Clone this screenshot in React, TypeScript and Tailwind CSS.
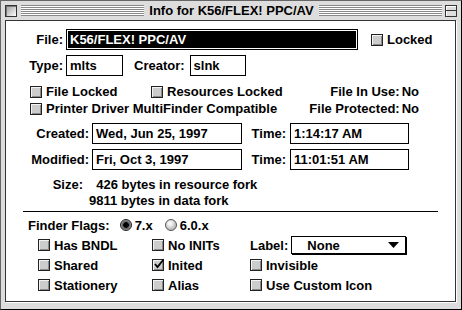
import React from 'react'

const font = "font-['Liberation_Sans',Arial,sans-serif] font-bold text-[13px] text-black"

function Check({ checked }: { checked?: boolean }) {
  return (
    <span className="relative inline-block w-[12px] h-[12px] shrink-0 border border-[#222] bg-[#cccccc] shadow-[inset_1px_1px_0_#f4f4f4,inset_-1px_-1px_0_#8a8a8a]">
      {checked && (
        <svg className="absolute left-[0px] top-[-2px]" width="12" height="12" viewBox="0 0 12 12">
          <path d="M2 6 L4.5 9 L10.5 1.5" fill="none" stroke="#000" strokeWidth="1.8" />
        </svg>
      )}
    </span>
  )
}

function CheckRow({ label, checked, className = '' }: { label: string; checked?: boolean; className?: string }) {
  return (
    <div className={`flex items-center gap-[4px] ${className}`}>
      <Check checked={checked} />
      <span className="leading-none">{label}</span>
    </div>
  )
}

function Radio({ on }: { on?: boolean }) {
  return on ? (
    <span className="inline-block w-[12px] h-[12px] rounded-full border border-[#222] bg-[radial-gradient(circle_at_50%_50%,#000_0,#000_2.5px,#555_3px,#999_5px)]" />
  ) : (
    <span className="inline-block w-[12px] h-[12px] rounded-full border border-[#555] bg-[radial-gradient(circle_at_40%_35%,#fff_0,#eee_2px,#bbb_6px)]" />
  )
}

function Field({ value, className = '' }: { value: string; className?: string }) {
  return (
    <div className={`h-[21px] border border-black bg-white flex items-center pl-[3px] ${className}`}>
      <span className="leading-none">{value}</span>
    </div>
  )
}

function Stripes() {
  return <div className="flex-1 h-[11px] bg-[repeating-linear-gradient(to_bottom,#888_0px,#888_1px,#fff_1px,#fff_2px)]" />
}

export default function App() {
  return (
    <div className={`w-[462px] h-[310px] bg-[#dddddd] border border-[#666] border-r-black border-b-black flex flex-col ${font}`}>
      {/* title bar */}
      <div className="h-[19px] flex items-center pl-[4px] pr-[4px] shrink-0">
        <span className="w-[12px] h-[12px] border border-[#333] bg-[linear-gradient(135deg,#999,#fff)] shadow-[inset_1px_1px_0_#777]" />
        <div className="flex-1 flex items-center ml-[4px] mr-[3px]">
          <Stripes />
          <span className="px-[5px] leading-none">Info for K56/FLEX! PPC/AV</span>
          <Stripes />
        </div>
        <span className="relative w-[12px] h-[12px] border border-[#333] bg-[#dddddd] shadow-[inset_1px_1px_0_#fff]">
          <span className="absolute left-0 right-0 top-[4px] h-[1px] bg-[#333]" />
        </span>
      </div>

      {/* content */}
      <div className="flex-1 ml-[4px] mr-[5px] mb-[7px] bg-white border border-[#333] shadow-[1px_1px_0_#fff]">
        {/* File */}
        <div className="flex items-center mt-[8px]">
          <span className="w-[57px] text-right leading-none">File:</span>
          <div className="ml-[3px] w-[292px] h-[21px] border border-black bg-white p-[1px]">
            <div className="h-full bg-black flex items-center pl-[2px]">
              <span className="text-white leading-none">K56/FLEX! PPC/AV</span>
            </div>
          </div>
          <CheckRow label="Locked" className="ml-[13px]" />
        </div>

        {/* Type / Creator */}
        <div className="flex items-center mt-[5px]">
          <span className="w-[57px] text-right leading-none">Type:</span>
          <Field value="mlts" className="ml-[3px] w-[57px]" />
          <span className="ml-[11px] leading-none">Creator:</span>
          <Field value="slnk" className="ml-[5px] w-[56px]" />
        </div>

        {/* file attributes */}
        <div className="flex items-center h-[17px] mt-[7px] pl-[24px]">
          <CheckRow label="File Locked" className="w-[121px]" />
          <CheckRow label="Resources Locked" />
          <span className="ml-auto mr-[36px] leading-none">File In Use:<span className="ml-[2px]">No</span></span>
        </div>
        <div className="flex items-center h-[17px] pl-[24px]">
          <CheckRow label="Printer Driver MultiFinder Compatible" />
          <span className="ml-auto mr-[36px] leading-none">File Protected:<span className="ml-[2px]">No</span></span>
        </div>

        {/* dates */}
        <div className="flex items-center mt-[6px]">
          <span className="w-[83px] text-right leading-none">Created:</span>
          <Field value="Wed, Jun 25, 1997" className="ml-[3px] w-[150px]" />
          <span className="w-[44px] text-right leading-none">Time:</span>
          <Field value="1:14:17 AM" className="ml-[4px] w-[119px]" />
        </div>
        <div className="flex items-center mt-[5px]">
          <span className="w-[83px] text-right leading-none">Modified:</span>
          <Field value="Fri, Oct 3, 1997" className="ml-[3px] w-[150px]" />
          <span className="w-[44px] text-right leading-none">Time:</span>
          <Field value="11:01:51 AM" className="ml-[4px] w-[119px]" />
        </div>

        {/* size */}
        <div className="flex mt-[7px] leading-[16px]">
          <span className="w-[77px] text-right">Size:</span>
          <div className="ml-[6px] flex flex-col">
            <span>&nbsp;&nbsp;426 bytes in resource fork</span>
            <span>9811 bytes in data fork</span>
          </div>
        </div>

        <div className="mx-[17px] mt-[2px] h-[1px] bg-black" />

        {/* finder flags */}
        <div className="flex items-center h-[16px] mt-[5px] pl-[22px]">
          <span className="leading-none">Finder Flags:</span>
          <span className="ml-[10px] flex items-center gap-[3px]">
            <Radio on />
            <span className="leading-none">7.x</span>
          </span>
          <span className="ml-[12px] flex items-center gap-[3px]">
            <Radio />
            <span className="leading-none">6.0.x</span>
          </span>
        </div>

        <div className="mt-[2px] pl-[32px] grid grid-cols-[114px_98px_1fr] auto-rows-[20px] items-center">
          <CheckRow label="Has BNDL" />
          <CheckRow label="No INITs" />
          <div className="flex items-center">
            <span className="leading-none">Label:</span>
            <div className="ml-[3px] w-[115px] h-[18px] border border-black bg-white shadow-[1px_1px_0_#000] flex items-center pl-[15px] pr-[6px]">
              <span className="leading-none">None</span>
              <svg className="ml-auto" width="11" height="6" viewBox="0 0 11 6">
                <path d="M0 0 H11 L5.5 6 Z" fill="#000" />
              </svg>
            </div>
          </div>
          <CheckRow label="Shared" />
          <CheckRow label="Inited" checked />
          <CheckRow label="Invisible" />
          <CheckRow label="Stationery" />
          <CheckRow label="Alias" />
          <CheckRow label="Use Custom Icon" />
        </div>
      </div>
    </div>
  )
}
